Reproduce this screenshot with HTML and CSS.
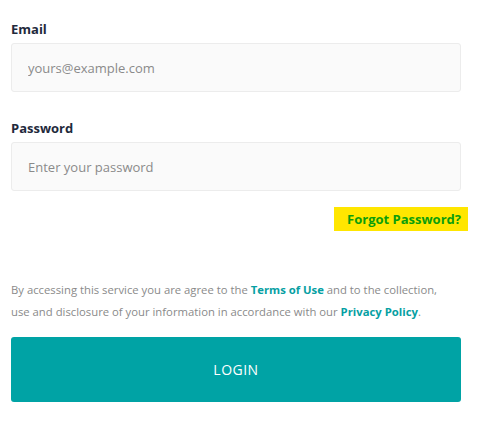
FILE: index.html
```html
<!DOCTYPE html>
<html>
<head>
<meta charset="utf-8">
<link rel="stylesheet" href="styles.css">
</head>
<body>
<form class="login">
  <div class="field">
    <label class="label">Email</label>
    <input class="input" type="text" placeholder="yours@example.com">
  </div>
  <div class="field">
    <label class="label">Password</label>
    <input class="input" type="password" placeholder="Enter your password">
  </div>
  <div class="forgot-row">
    <a class="forgot" href="#">Forgot Password?</a>
  </div>
  <p class="terms">By accessing this service you are agree to the <a href="#">Terms of Use</a> and to the collection, use and disclosure of your information in accordance with our <a href="#">Privacy Policy</a>.</p>
  <button class="btn" type="button">LOGIN</button>
</form>
</body>
</html>
```
FILE: styles.css
```css
html, body {
  margin: 0;
  padding: 0;
  background: #fff;
}
body {
  font-family: "Open Sans", "Noto Sans", sans-serif;
}
.login {
  width: 450px;
  padding: 20px 0 0 11px;
  display: flex;
  flex-direction: column;
}
.field {
  display: flex;
  flex-direction: column;
  margin-bottom: 27px;
}
.field + .field {
  margin-bottom: 0;
}
.label {
  font-size: 13px;
  font-weight: 700;
  line-height: 18px;
  color: #1f2a3c;
  margin-bottom: 5px;
}
.input {
  box-sizing: border-box;
  height: 49px;
  border: 1px solid #ececec;
  border-radius: 3px;
  background: #fafafa;
  padding: 0 16px;
  font-family: inherit;
  font-size: 13px;
  color: #333;
  outline: none;
}
.input::placeholder {
  color: #8a8a8a;
}
.forgot-row {
  display: flex;
  justify-content: flex-end;
  margin-top: 16px;
  margin-right: -7px;
}
.forgot {
  background: #ffe600;
  color: #0b9e0b;
  font-size: 13px;
  font-weight: 700;
  line-height: 24px;
  padding: 0 7px 0 13px;
  text-decoration: none;
}
.terms {
  margin: 48px 0 14px;
  padding-right: 10px;
  font-size: 11.3px;
  line-height: 22px;
  color: #8a8a8a;
}
.terms a {
  color: #06a0a3;
  font-weight: 700;
  text-decoration: none;
}
.btn {
  height: 65px;
  border: none;
  border-radius: 3px;
  background: #00a3a5;
  color: #fff;
  font-family: inherit;
  font-size: 14px;
  letter-spacing: 0.5px;
  cursor: pointer;
}
```
